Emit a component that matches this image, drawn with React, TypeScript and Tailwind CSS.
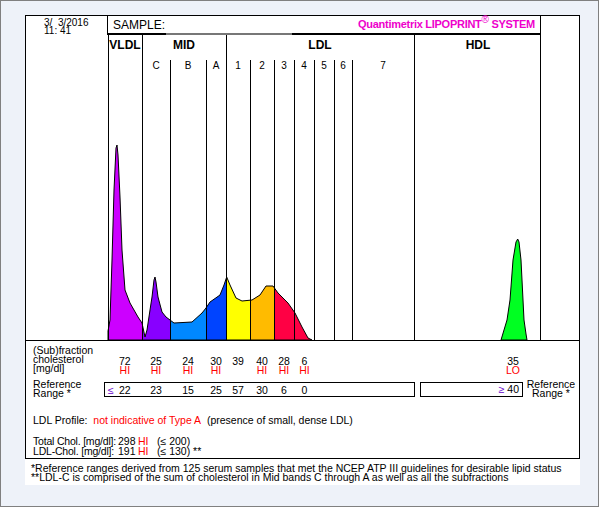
import React from "react";

const F = { fontFamily: '"Liberation Sans", Arial, sans-serif' };

const pts: [number, number][] = [
  [108, 340], [108, 331], [110, 320], [112, 260], [114, 190], [116, 148], [117, 145], [118, 155], [120, 197], [122, 250], [125, 290], [130, 303], [138, 317], [142, 323], [145, 337], [147, 330], [150, 310], [152, 297], [154, 280], [155, 277], [156, 282], [158, 297], [162, 312], [166, 317], [170, 320], [174, 323], [192, 322], [202, 313], [206, 308], [210, 302], [220, 295], [224, 285], [226.7, 277], [230, 285], [236, 298], [242, 301], [252, 300], [260, 295], [266, 286], [273, 286], [278, 293], [288, 303], [295, 313], [302, 327], [308, 338], [312, 340],
];
const hdl: [number, number][] = [
  [501, 340], [504, 330], [507, 320], [510, 300], [513, 260], [516, 242], [517.7, 239], [519, 242], [521, 260], [523, 300], [524, 320], [526, 334], [527, 340],
];
const bands: [number, number, string][] = [
  [108, 142, "#cc00ff"], [142, 170, "#8800ff"], [170, 206, "#0088ff"], [206, 226, "#0044ff"],
  [226, 250, "#ffff00"], [250, 274, "#ffbb00"], [274, 314, "#ff0044"],
];
const majors = [108, 142, 226, 414, 540];
const minors = [170, 206, 250, 274, 294, 314, 334, 352];
const subs: [number, string][] = [
  [156, "C"], [188, "B"], [216, "A"], [238, "1"], [262, "2"], [284, "3"], [304, "4"], [324, "5"], [343, "6"], [383, "7"],
];
const centers = [124.8, 156, 188, 216, 238, 262, 284, 304.5];
const vals = ["72", "25", "24", "30", "39", "40", "28", "6"];
const his = ["HI", "HI", "HI", "HI", "", "HI", "HI", "HI"];
const refs = ["22", "23", "15", "25", "57", "30", "6", "0"];

function Cols({ items, cls }: { items: string[]; cls: string }) {
  let prev = 26;
  return (
    <div className="flex">
      {items.map((t, i) => {
        const l = centers[i] - 12;
        const ml = l - prev;
        prev = l + 24;
        return (
          <span key={i} className={`w-[24px] shrink-0 text-center ${cls}`} style={{ marginLeft: ml }}>
            {t}
          </span>
        );
      })}
    </div>
  );
}

export default function App() {
  const poly = pts.map((p) => p.join(",")).join(" ");
  const hpoly = hdl.map((p) => p.join(",")).join(" ");
  return (
    <div className="w-[599px] h-[507px] bg-[#eef2f9] border border-[#808080] text-[11px] text-black overflow-hidden" style={F}>
      <div className="ml-[24px] mt-[14px] w-[555px] border border-black bg-white">
        {/* header */}
        <div className="flex h-[19px]">
          <div className="w-[82px] border-r border-black pl-[18px] pt-[3px] leading-[8px] text-[10px] whitespace-nowrap">
            <div>3/&nbsp;&nbsp;3/2016</div>
            <div>11:&nbsp;41</div>
          </div>
          <div className="w-[432px] relative border-b-2 border-black flex items-center justify-between px-[5px]">
            <span className="text-[12px]">SAMPLE:</span>
            <span className="text-[11px] font-bold text-[#ee00cc] tracking-tight">
              Quantimetrix LIPOPRINT<sup className="text-[10px] font-normal">®</sup> SYSTEM
            </span>
            <div className="absolute left-[58px] bottom-[-2px] w-[126px] h-[2px] bg-[#777]" />
          </div>
          <div className="flex-1 border-l border-black" />
        </div>
        {/* chart */}
        <svg width={553} height={306} viewBox="26 35 553 306" className="block">
          <defs>
            <clipPath id="cp">
              <polygon points={poly} />
            </clipPath>
          </defs>
          <g clipPath="url(#cp)">
            {bands.map(([a, b, c]) => (
              <rect key={a} x={a} y={100} width={b - a} height={241} fill={c} />
            ))}
          </g>
          <polygon points={poly} fill="none" stroke="#000" strokeWidth={1} />
          <polygon points={hpoly} fill="#00ff22" stroke="#000" strokeWidth={1} />
          {majors.map((x) => (
            <line key={x} x1={x + 0.5} x2={x + 0.5} y1={35} y2={340} stroke="#000" />
          ))}
          {minors.map((x) => (
            <line key={x} x1={x + 0.5} x2={x + 0.5} y1={60} y2={340} stroke="#000" />
          ))}
          <line x1={26} x2={579} y1={340.5} y2={340.5} stroke="#000" />
          <g fontFamily='"Liberation Sans", Arial, sans-serif' fontWeight="bold" fontSize="12" textAnchor="middle">
            <text x={125} y={49}>VLDL</text>
            <text x={184} y={49}>MID</text>
            <text x={320} y={49}>LDL</text>
            <text x={478} y={49}>HDL</text>
          </g>
          <g fontFamily='"Liberation Sans", Arial, sans-serif' fontSize="10" textAnchor="middle">
            {subs.map(([x, t]) => (
              <text key={t} x={x} y={69}>{t}</text>
            ))}
          </g>
        </svg>
        {/* data */}
        <div className="relative h-[117px] leading-[9px] text-[10.5px] whitespace-nowrap">
          <div className="flex pt-[5px]">
            <div className="pl-[7px] w-[90px]">
              <div>(Sub)fraction</div>
              <div>cholesterol</div>
              <div>[mg/dl]</div>
            </div>
          </div>
          <div className="absolute left-0 top-[16px]">
            <Cols items={vals} cls="" />
            <Cols items={his} cls="text-[#ff0000]" />
          </div>
          <div className="absolute left-[475px] top-[16px] w-[24px] text-center">
            <div>35</div>
            <div className="text-[#ff0000]">LO</div>
          </div>
          <div className="flex items-center mt-[7px]">
            <div className="pl-[7px] w-[78px]">
              <div>Reference</div>
              <div>Range *</div>
            </div>
            <div className="w-[311px] h-[15px] border border-black relative">
              <div className="relative left-[-79px] top-[1px] leading-[12px]">
                <Cols items={refs} cls="" />
              </div>
              <span className="absolute left-[3px] top-[1px] leading-[12px] text-[#6600cc]">≤</span>
            </div>
            <div className="ml-[5px] w-[103px] h-[15px] border border-black leading-[12px] text-right pr-[3px]">
              <span className="text-[#6600cc]">≥</span> 40
            </div>
            <div className="flex-1 text-center">
              <div>Reference</div>
              <div>Range *</div>
            </div>
          </div>
          <div className="pl-[7px] mt-[16px] leading-[12px]">
            LDL Profile:&nbsp; <span className="text-[#ff0000]">not indicative of Type A</span>&nbsp; (presence of small, dense LDL)
          </div>
          <div className="pl-[7px] mt-[10px] leading-[10px]">
            <div className="flex">
              <span className="w-[85px] shrink-0 tracking-[-0.2px]">Total Chol. [mg/dl]:</span>
              <span className="w-[20px] shrink-0">298</span>
              <span className="w-[19px] shrink-0 text-[#ff0000]">HI</span>
              <span>(≤ 200)</span>
            </div>
            <div className="flex">
              <span className="w-[85px] shrink-0 tracking-[-0.2px]">LDL-Chol. [mg/dl]:</span>
              <span className="w-[20px] shrink-0">191</span>
              <span className="w-[19px] shrink-0 text-[#ff0000]">HI</span>
              <span>(≤ 130) **</span>
            </div>
          </div>
        </div>
      </div>
      <div className="ml-[24px] w-[555px] h-[26px] bg-white pl-[6px] pt-[5px] leading-[9px] text-[10.5px] whitespace-nowrap">
        <div>*Reference ranges derived from 125 serum samples that met the NCEP ATP III guidelines for desirable lipid status</div>
        <div>**LDL-C is comprised of the sum of cholesterol in Mid bands C through A as well as all the subfractions</div>
      </div>
    </div>
  );
}
